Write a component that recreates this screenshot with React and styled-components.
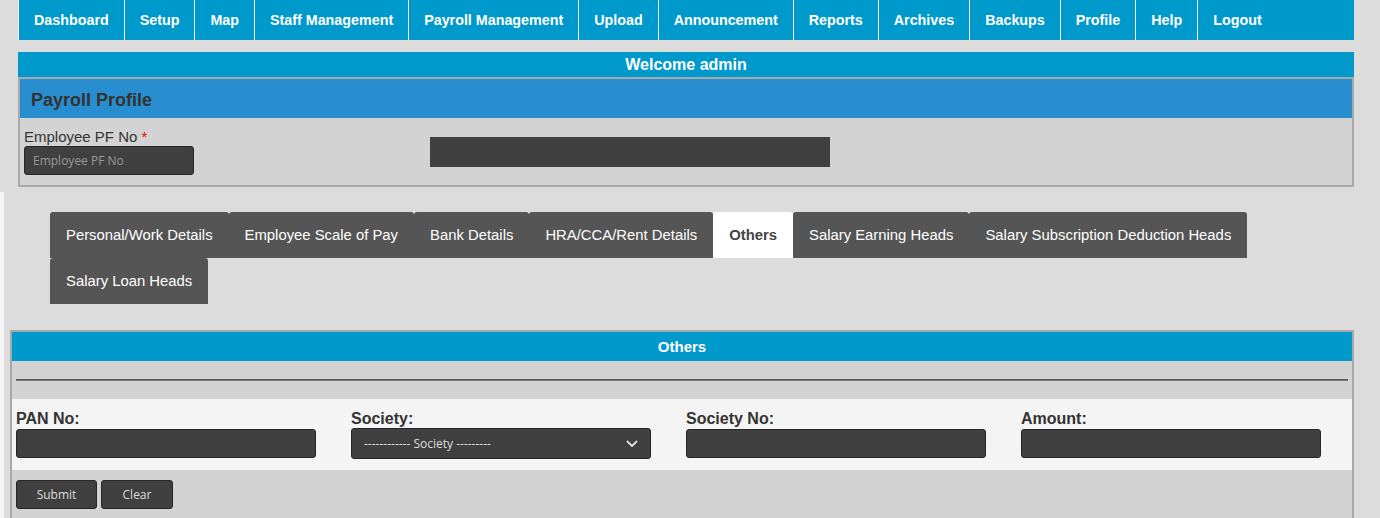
import React from "react";
import styled, { createGlobalStyle } from "styled-components";

const GlobalStyle = createGlobalStyle`
  html, body {
    margin: 0;
    padding: 0;
    background: #dcdcdc;
    font-family: "Liberation Sans", Arial, sans-serif;
  }
`;

const Page = styled.div`
  width: 1380px;
  min-height: 518px;
  overflow: hidden;
`;

const Top = styled.div`
  margin-left: 18px;
  width: 1336px;
`;

const Nav = styled.ul`
  display: flex;
  list-style: none;
  margin: 0;
  padding: 0;
  height: 40px;
  background: #0099cc;
`;

const NavItem = styled.li`
  display: flex;
  align-items: center;
  padding: 0 15px;
  border-left: 1px solid #fff;
  color: #fff;
  font-weight: bold;
  font-size: 14.3px;
  white-space: nowrap;
  cursor: pointer;
`;

const Welcome = styled.div`
  margin-top: 12px;
  height: 25px;
  line-height: 25px;
  background: #0099cc;
  color: #fff;
  font-weight: bold;
  font-size: 16px;
  text-align: center;
`;

const Panel = styled.div`
  border: 2px solid #a9a9a9;
  background: #d3d3d3;
`;

const ProfileHead = styled.div`
  height: 39px;
  line-height: 42px;
  padding-left: 11px;
  background: #298ecf;
  color: #333;
  font-weight: bold;
  font-size: 18px;
`;

const ProfileBody = styled.div`
  display: flex;
  align-items: center;
  padding: 10px 4px;
`;

const PfField = styled.div`
  width: 406px;
`;

const PfLabel = styled.label`
  display: block;
  font-size: 15px;
  line-height: 18px;
  color: #333;

  span {
    color: #e00;
  }
`;

const DarkInput = styled.input`
  box-sizing: border-box;
  display: block;
  width: ${(p) => p.$width || 300}px;
  height: 29px;
  padding: 0 8px;
  background: #404040;
  border: 1px solid #262626;
  border-radius: 3px;
  color: #eee;
  font-family: "Open Sans", sans-serif;
  font-size: 12px;
  outline: none;

  &::placeholder {
    color: #9a9a9a;
  }
`;

const NameBar = styled.div`
  width: 400px;
  height: 30px;
  background: #404040;
`;

const Lower = styled.div`
  margin-top: 5px;
  border-left: 4px solid #f4f4f4;
  padding-bottom: 20px;
`;

const Tabs = styled.div`
  display: flex;
  flex-wrap: wrap;
  max-width: 1300px;
  padding: 20px 0 0 46px;
`;

const Tab = styled.div`
  height: 46px;
  line-height: 46px;
  padding: 0 16px;
  border-radius: 3px 3px 0 0;
  background: ${(p) => (p.$active ? "#fff" : "#555")};
  color: ${(p) => (p.$active ? "#444" : "#fff")};
  font-weight: ${(p) => (p.$active ? "bold" : "normal")};
  font-size: 14.85px;
  white-space: nowrap;
  cursor: pointer;
`;

const OthersPanel = styled(Panel)`
  margin: 26px 26px 0 6px;
`;

const OthersHead = styled.div`
  height: 29px;
  line-height: 29px;
  background: #0099cc;
  color: #fff;
  font-weight: bold;
  font-size: 15px;
  text-align: center;
`;

const Rule = styled.div`
  padding: 18px 4px 18px;

  hr {
    margin: 0;
    height: 0;
    border: 0;
    border-top: 1px solid #555;
    border-bottom: 1px solid #7a7a7a;
  }
`;

const FieldRow = styled.div`
  display: grid;
  grid-template-columns: repeat(4, 1fr);
  background: #f4f4f4;
  padding: 11px 0 11px;
`;

const Field = styled.div`
  padding-left: 4px;
`;

const FieldLabel = styled.label`
  display: block;
  font-weight: bold;
  font-size: 16px;
  line-height: 18px;
  color: #333;
  margin-bottom: ${(p) => (p.$tight ? 0 : 1)}px;
`;

const SelectBox = styled.div`
  box-sizing: border-box;
  display: flex;
  align-items: center;
  justify-content: space-between;
  width: 300px;
  height: 31px;
  padding: 0 12px;
  background: #404040;
  border: 1px solid #262626;
  border-radius: 3px;
  color: #ddd;
  font-family: "Open Sans", sans-serif;
  font-size: 12px;
`;

const Actions = styled.div`
  display: flex;
  gap: 4px;
  padding: 10px 4px 12px;
`;

const Button = styled.button`
  width: ${(p) => p.$w}px;
  height: 29px;
  padding: 0;
  background: #404040;
  border: 1px solid #262626;
  border-radius: 3px;
  color: #ddd;
  font-family: "Open Sans", sans-serif;
  font-size: 12px;
  cursor: pointer;
`;

const navItems = [
  "Dashboard",
  "Setup",
  "Map",
  "Staff Management",
  "Payroll Management",
  "Upload",
  "Announcement",
  "Reports",
  "Archives",
  "Backups",
  "Profile",
  "Help",
  "Logout",
];

const tabs = [
  "Personal/Work Details",
  "Employee Scale of Pay",
  "Bank Details",
  "HRA/CCA/Rent Details",
  "Others",
  "Salary Earning Heads",
  "Salary Subscription Deduction Heads",
  "Salary Loan Heads",
];

function Chevron() {
  return (
    <svg width="12" height="8" viewBox="0 0 12 8" fill="none">
      <path d="M1.5 1.5 6 6l4.5-4.5" stroke="#e0e0e0" strokeWidth="1.8" strokeLinecap="round" strokeLinejoin="round" />
    </svg>
  );
}

export default function App() {
  return (
    <Page>
      <GlobalStyle />
      <Top>
        <Nav>
          {navItems.map((item) => (
            <NavItem key={item}>{item}</NavItem>
          ))}
        </Nav>
        <Welcome>Welcome admin</Welcome>
        <Panel>
          <ProfileHead>Payroll Profile</ProfileHead>
          <ProfileBody>
            <PfField>
              <PfLabel>
                Employee PF No <span>*</span>
              </PfLabel>
              <DarkInput $width={170} placeholder="Employee PF No" />
            </PfField>
            <NameBar />
          </ProfileBody>
        </Panel>
      </Top>

      <Lower>
        <Tabs>
          {tabs.map((t) => (
            <Tab key={t} $active={t === "Others"}>
              {t}
            </Tab>
          ))}
        </Tabs>

        <OthersPanel>
          <OthersHead>Others</OthersHead>
          <Rule>
            <hr />
          </Rule>
          <FieldRow>
            <Field>
              <FieldLabel>PAN No:</FieldLabel>
              <DarkInput />
            </Field>
            <Field>
              <FieldLabel $tight>Society:</FieldLabel>
              <SelectBox>
                <span>------------ Society ---------</span>
                <Chevron />
              </SelectBox>
            </Field>
            <Field>
              <FieldLabel>Society No:</FieldLabel>
              <DarkInput />
            </Field>
            <Field>
              <FieldLabel>Amount:</FieldLabel>
              <DarkInput />
            </Field>
          </FieldRow>
          <Actions>
            <Button $w={81}>Submit</Button>
            <Button $w={72}>Clear</Button>
          </Actions>
        </OthersPanel>
      </Lower>
    </Page>
  );
}
